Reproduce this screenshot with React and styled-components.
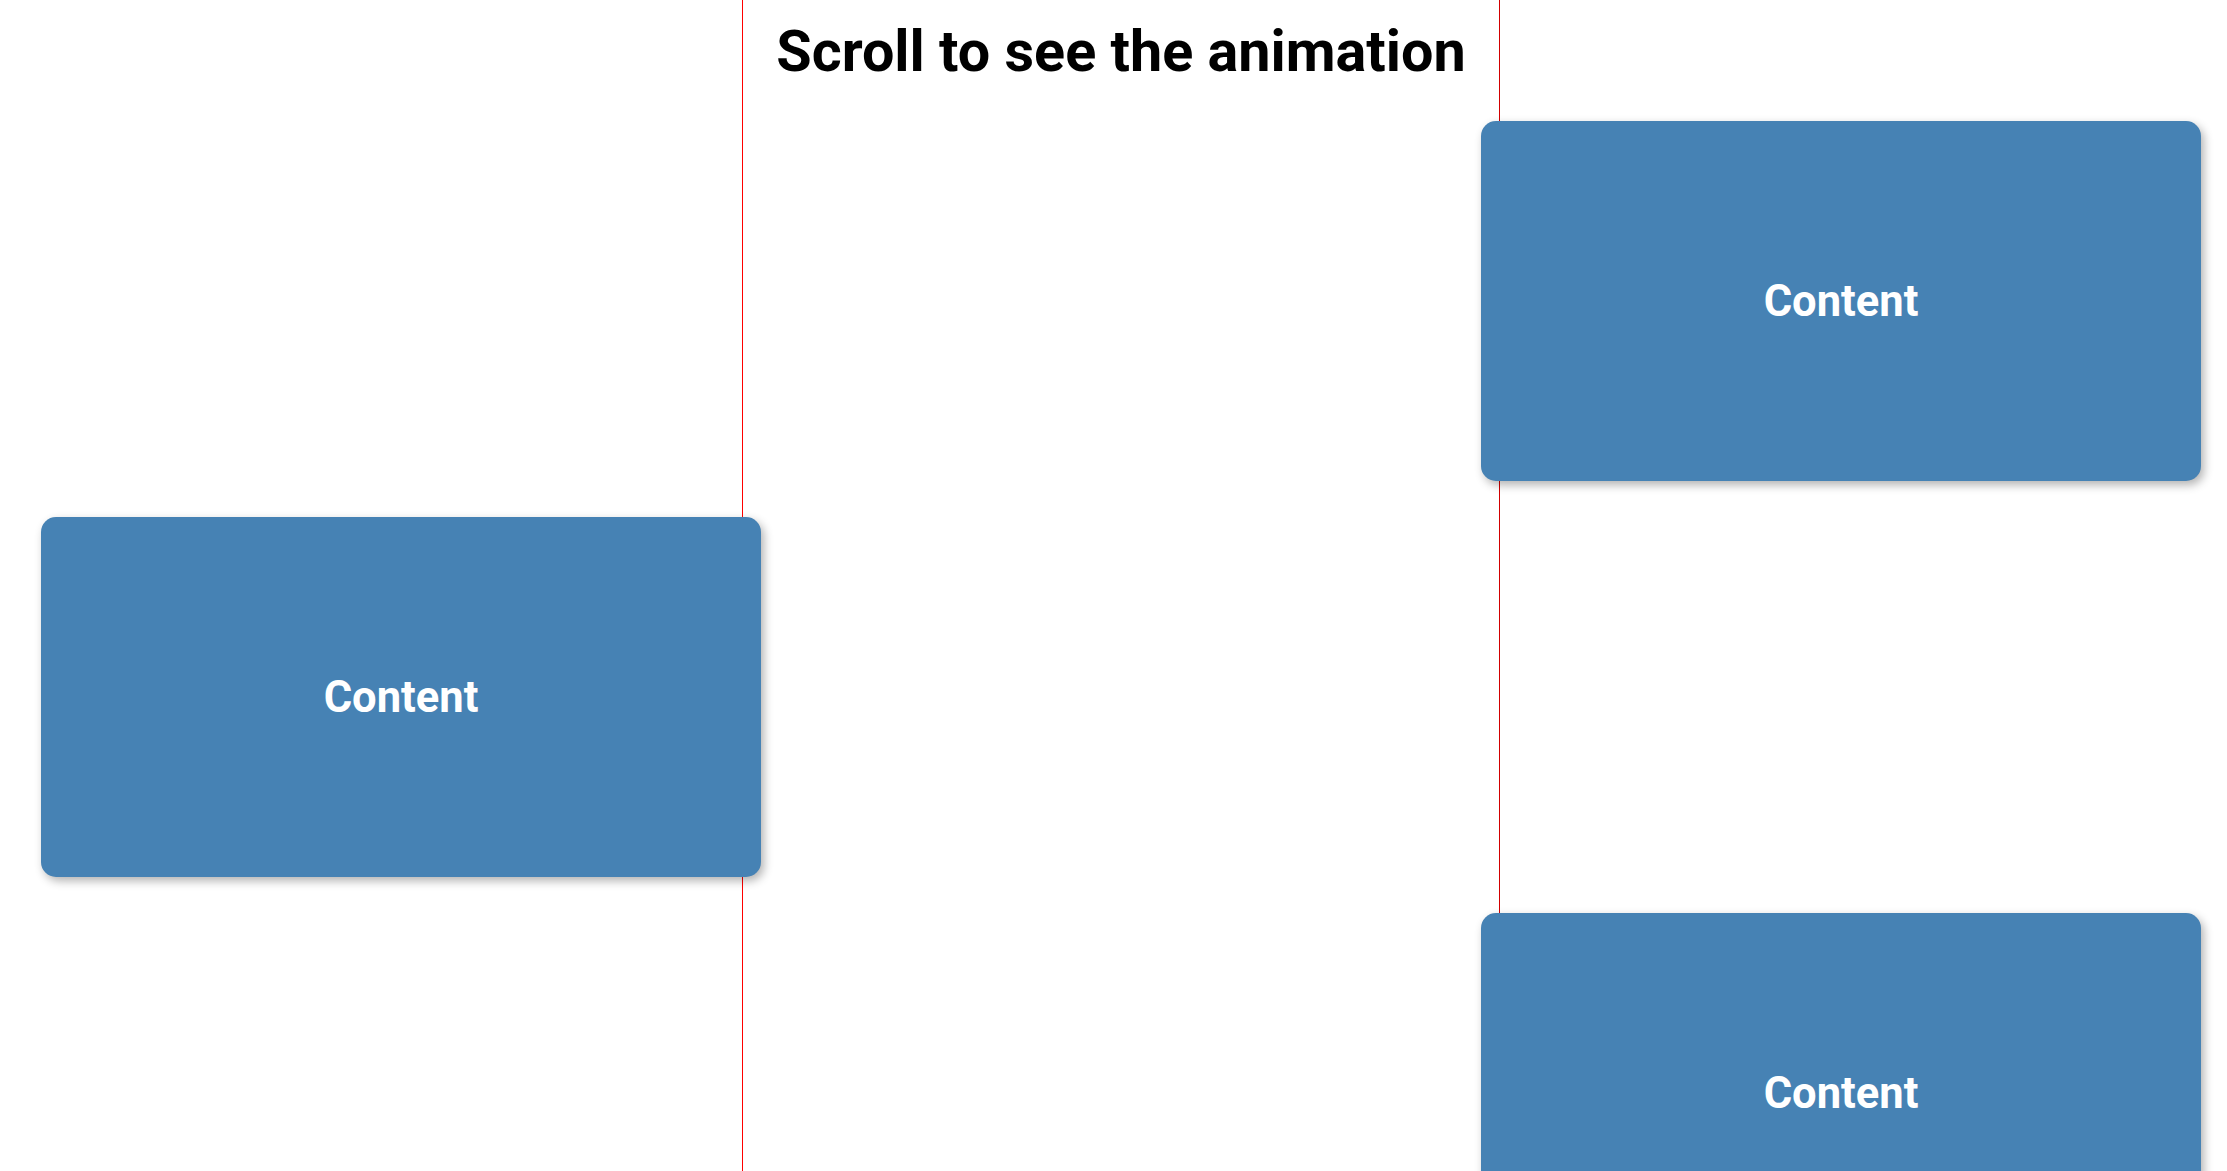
import React from 'react';
import styled, { createGlobalStyle } from 'styled-components';

//////////////////////////////////////////////////

const items = [
  { id: 1, column: 3, row: 2 },
  { id: 2, column: 1, row: 3 },
  { id: 3, column: 3, row: 4 },
];

const App = () => {
  return (
    <>
      <GlobalStyle />
      <Page>
        <GuideLine $left={742} $color='#ff0000' />
        <GuideLine $left={1499} $color='#d20000' />
        <Title>Scroll to see the animation</Title>
        {items.map(item => (
          <Card key={item.id} $column={item.column} $row={item.row}>
            Content
          </Card>
        ))}
      </Page>
    </>
  );
};

//////////////////////////////////////////////////

const GlobalStyle = createGlobalStyle`
  html, body {
    margin: 0;
    padding: 0;
    background: #ffffff;
  }
  body {
    font-family: Roboto, 'Liberation Sans', sans-serif;
  }
`;

const Page = styled.div`
  position: relative;
  display: grid;
  grid-template-columns: repeat(3, 720px);
  grid-template-rows: 85px;
  grid-auto-rows: 360px;
  row-gap: 36px;
  padding: 0 26px 60px 41px;
  min-height: 100vh;
  box-sizing: border-box;
  overflow: hidden;
`;

const GuideLine = styled.div`
  position: absolute;
  top: 0;
  bottom: 0;
  left: ${props => props.$left}px;
  width: 1px;
  background: ${props => props.$color};
  z-index: 0;
`;

const Title = styled.h1`
  grid-column: 1 / -1;
  grid-row: 1;
  align-self: start;
  margin: 18px 0 0;
  font-size: 57.5px;
  font-weight: 700;
  text-align: center;
  color: #000000;
  position: relative;
  z-index: 1;
`;

const Card = styled.div`
  grid-column: ${props => props.$column};
  grid-row: ${props => props.$row};
  position: relative;
  z-index: 1;
  display: flex;
  align-items: center;
  justify-content: center;
  background: #4682b4;
  border-radius: 15px;
  box-shadow: 3px 4px 10px rgba(0, 0, 0, 0.3);
  color: #ffffff;
  font-size: 43.5px;
  font-weight: 700;
`;

//////////////////////////////////////////////////

export default App;
